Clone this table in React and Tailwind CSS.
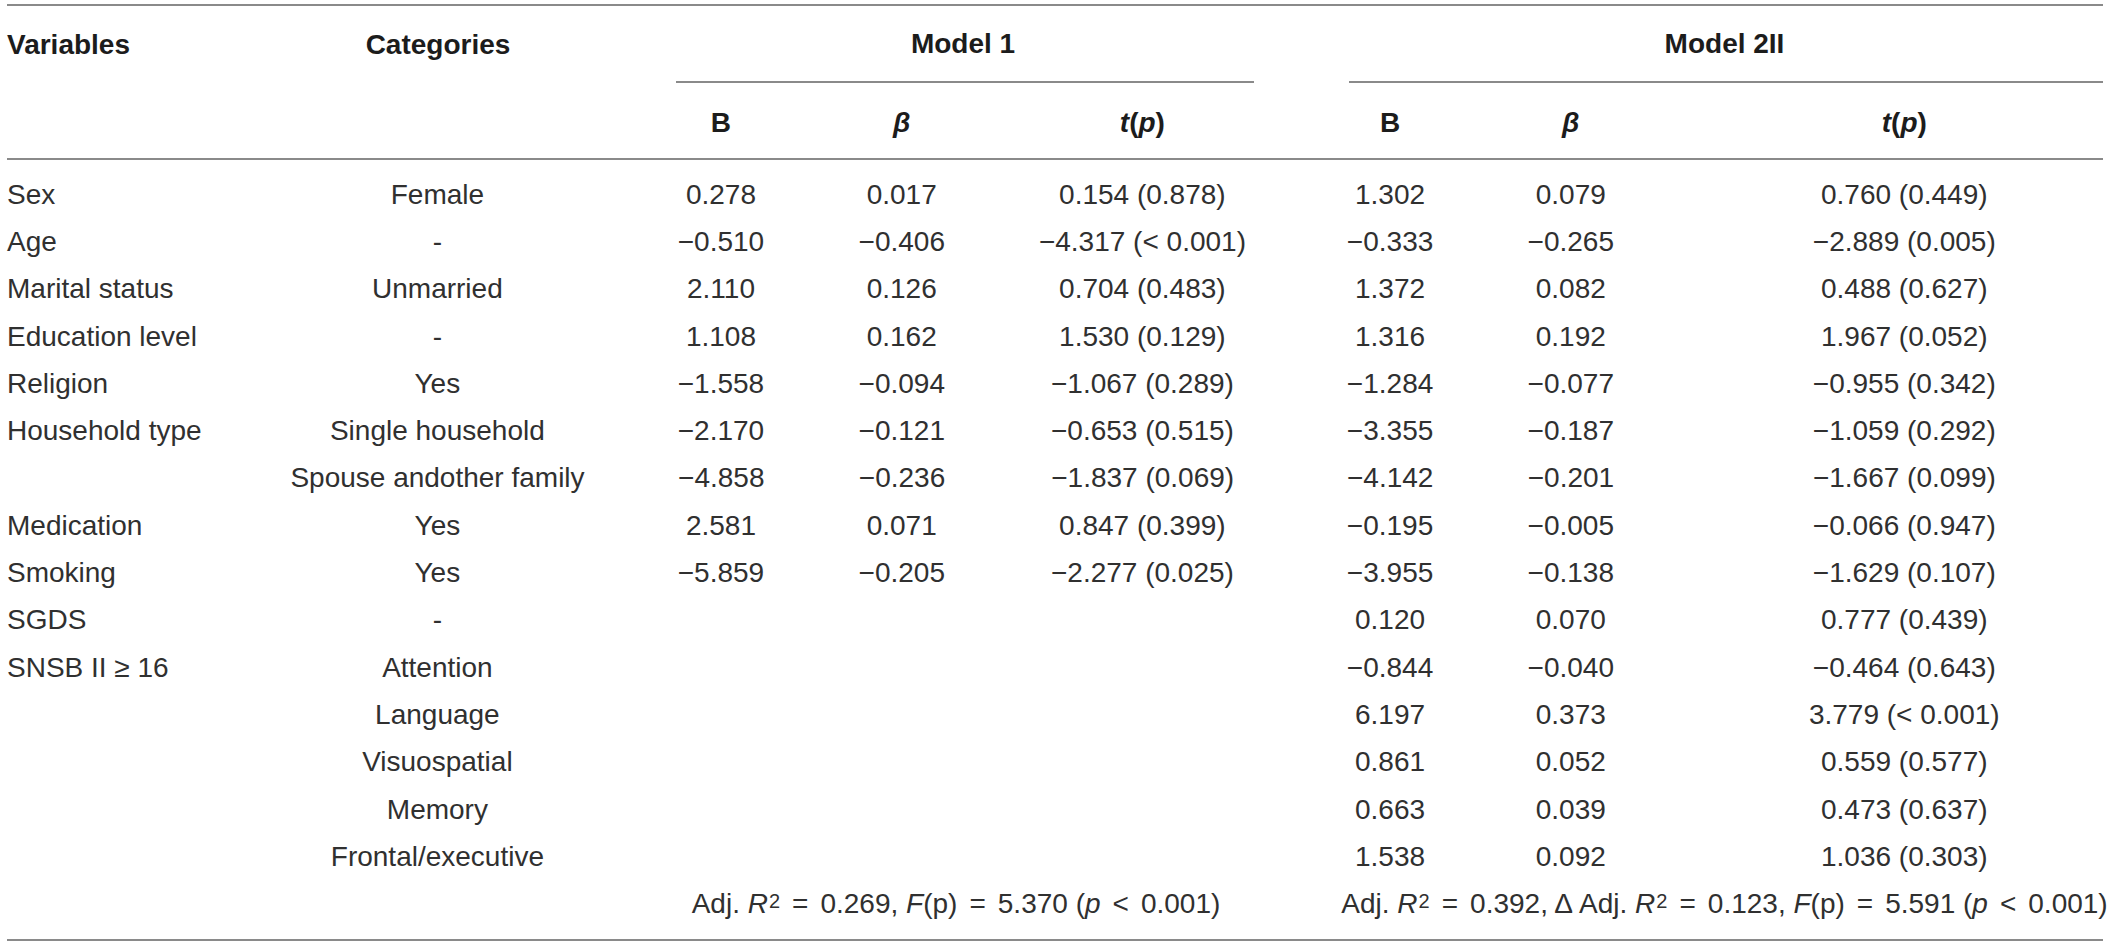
const cols = ["w-[289px] justify-start", "w-[284px] justify-center", "w-[284px] justify-center", "w-[78px] justify-center", "w-[404px] justify-center", "w-[92px] justify-center", "w-[270px] justify-center", "w-[398px] justify-center"];

const rows = [
  ["Sex", "Female", "0.278", "0.017", "0.154 (0.878)", "1.302", "0.079", "0.760 (0.449)"],
  ["Age", "-", "−0.510", "−0.406", "−4.317 (< 0.001)", "−0.333", "−0.265", "−2.889 (0.005)"],
  ["Marital status", "Unmarried", "2.110", "0.126", "0.704 (0.483)", "1.372", "0.082", "0.488 (0.627)"],
  ["Education level", "-", "1.108", "0.162", "1.530 (0.129)", "1.316", "0.192", "1.967 (0.052)"],
  ["Religion", "Yes", "−1.558", "−0.094", "−1.067 (0.289)", "−1.284", "−0.077", "−0.955 (0.342)"],
  ["Household type", "Single household", "−2.170", "−0.121", "−0.653 (0.515)", "−3.355", "−0.187", "−1.059 (0.292)"],
  ["", "Spouse andother family", "−4.858", "−0.236", "−1.837 (0.069)", "−4.142", "−0.201", "−1.667 (0.099)"],
  ["Medication", "Yes", "2.581", "0.071", "0.847 (0.399)", "−0.195", "−0.005", "−0.066 (0.947)"],
  ["Smoking", "Yes", "−5.859", "−0.205", "−2.277 (0.025)", "−3.955", "−0.138", "−1.629 (0.107)"],
  ["SGDS", "-", "", "", "", "0.120", "0.070", "0.777 (0.439)"],
  ["SNSB II ≥ 16", "Attention", "", "", "", "−0.844", "−0.040", "−0.464 (0.643)"],
  ["", "Language", "", "", "", "6.197", "0.373", "3.779 (< 0.001)"],
  ["", "Visuospatial", "", "", "", "0.861", "0.052", "0.559 (0.577)"],
  ["", "Memory", "", "", "", "0.663", "0.039", "0.473 (0.637)"],
  ["", "Frontal/executive", "", "", "", "1.538", "0.092", "1.036 (0.303)"],
];

function Rule({ className = "" }) {
  return <div className={"h-[2px] bg-[#8a8a8a] " + className} />;
}

// math-ish relation sign with a bit of extra room either side
function Op({ children }) {
  return <span className="px-[12px]">{children}</span>;
}

function R2() {
  return (
    <>
      <i>R</i>
      <sup className="text-[20px] relative -top-[3px] ml-[1px]">2</sup>
    </>
  );
}

export default function App() {
  return (
    <div className="w-[2118px] h-[945px] bg-white text-[#303030] text-[28px] leading-none pl-[7px] pt-[4px]" style={{ fontFamily: '"Liberation Sans", Arial, sans-serif' }}>
      <div className="w-[2096px]">
        <Rule />

        {/* header row 1 */}
        <div className="flex font-bold text-[#1c1c1c]">
          <div className="w-[289px] h-[77px] flex items-center">Variables</div>
          <div className="w-[284px] h-[77px] flex items-center justify-center">Categories</div>
          <div className="w-[766px] flex flex-col">
            <div className="h-[75px] flex items-center justify-center">Model 1</div>
            <Rule className="ml-[96px] mr-[92px]" />
          </div>
          <div className="w-[757px] flex flex-col">
            <div className="h-[75px] flex items-center justify-center">Model 2II</div>
            <Rule className="ml-[3px]" />
          </div>
        </div>

        {/* header row 2 */}
        <div className="flex font-bold text-[#1c1c1c] h-[75px] pt-[5px]">
          <div className={"flex items-center " + cols[0]} />
          <div className={"flex items-center " + cols[1]} />
          <div className={"flex items-center " + cols[2]}>B</div>
          <div className={"flex items-center " + cols[3]}><i>β</i></div>
          <div className={"flex items-center " + cols[4]}><i>t</i>(<i>p</i>)</div>
          <div className={"flex items-center " + cols[5]}>B</div>
          <div className={"flex items-center " + cols[6]}><i>β</i></div>
          <div className={"flex items-center " + cols[7]}><i>t</i>(<i>p</i>)</div>
        </div>

        <Rule />

        <div className="pt-[11px] pb-[11px]">
          {rows.map((r, i) => (
            <div key={i} className="flex h-[47.3px]">
              {r.map((c, j) => (
                <div key={j} className={"flex items-center whitespace-nowrap " + cols[j]}>{c}</div>
              ))}
            </div>
          ))}
          <div className="flex h-[47.3px]">
            <div className="w-[289px]" />
            <div className="w-[284px]" />
            <div className="w-[766px] flex items-center justify-center whitespace-nowrap pr-[14px]">
              Adj.&nbsp;<R2 /><Op>=</Op>0.269,&nbsp;<i>F</i>(p)<Op>=</Op>5.370 (<i>p</i><Op>&lt;</Op>0.001)
            </div>
            <div className="w-[757px] flex items-center justify-center whitespace-nowrap">
              Adj.&nbsp;<R2 /><Op>=</Op>0.392, Δ Adj.&nbsp;<R2 /><Op>=</Op>0.123,&nbsp;<i>F</i>(p)<Op>=</Op>5.591 (<i>p</i><Op>&lt;</Op>0.001)
            </div>
          </div>
        </div>

        <Rule />
      </div>
    </div>
  );
}
